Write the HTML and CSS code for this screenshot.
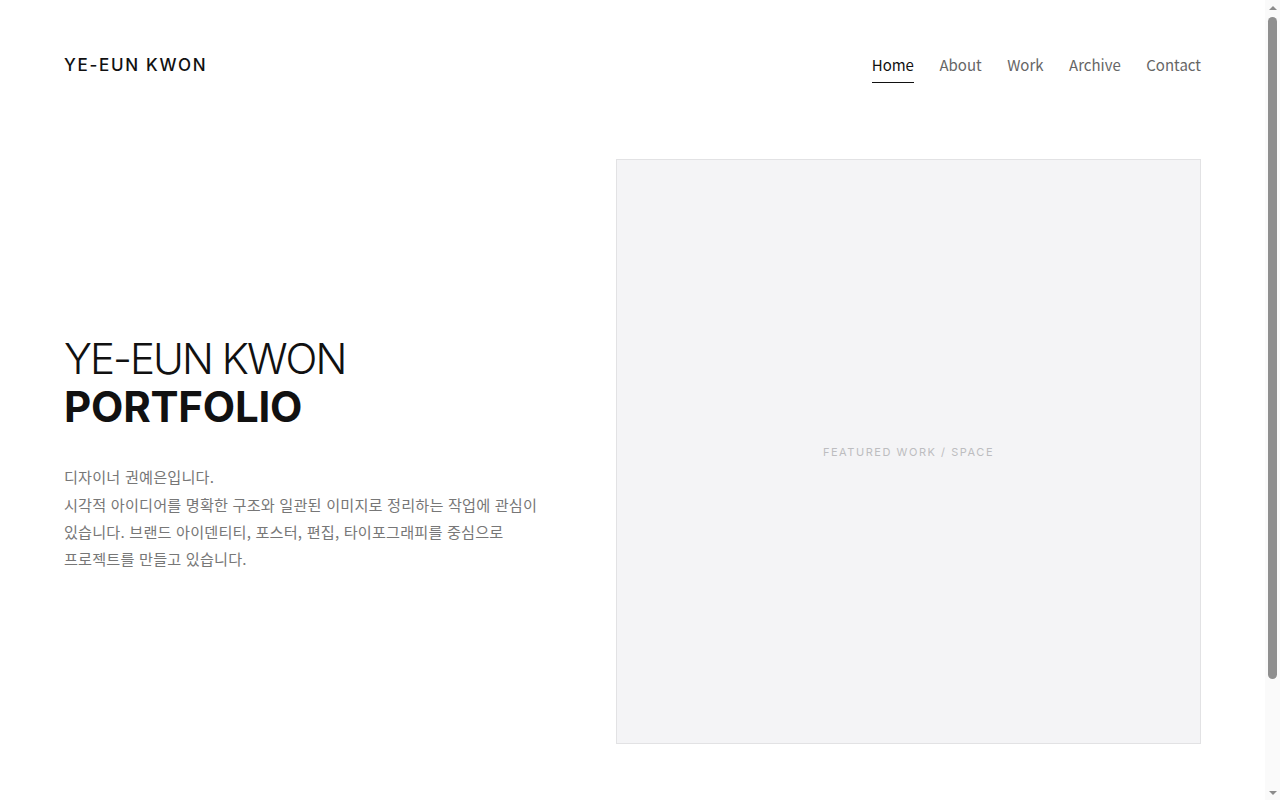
FILE: index.html
```html
<!DOCTYPE html>
<html lang="ko">
<head>
<meta charset="utf-8">
<title>YE-EUN KWON Portfolio</title>
<link rel="stylesheet" href="styles.css">
</head>
<body>
<div class="page">
  <header class="site-header">
    <a class="logo" href="#">YE-EUN KWON</a>
    <nav class="nav">
      <a class="nav-link active" href="#">Home</a>
      <a class="nav-link" href="#">About</a>
      <a class="nav-link" href="#">Work</a>
      <a class="nav-link" href="#">Archive</a>
      <a class="nav-link" href="#">Contact</a>
    </nav>
  </header>
  <main class="hero">
    <section class="hero-text">
      <h1 class="hero-title">
        <span class="title-light">YE-EUN KWON</span>
        <span class="title-bold">PORTFOLIO</span>
      </h1>
      <p class="hero-desc">디자이너 권예은입니다.<br>시각적 아이디어를 명확한 구조와 일관된 이미지로 정리하는 작업에 관심이 있습니다. 브랜드 아이덴티티, 포스터, 편집, 타이포그래피를 중심으로 프로젝트를 만들고 있습니다.</p>
    </section>
    <figure class="featured">
      <span class="featured-label">FEATURED WORK / SPACE</span>
    </figure>
  </main>
</div>
<div class="scrollbar" aria-hidden="true">
  <span class="sb-arrow"><span class="sb-tri up"></span></span>
  <span class="sb-thumb"></span>
  <span class="sb-space"></span>
  <span class="sb-arrow"><span class="sb-tri down"></span></span>
</div>
</body>
</html>
```

FILE: styles.css
```css
* { box-sizing: border-box; }
html, body {
  margin: 0;
  padding: 0;
}
body {
  background: #fff;
  color: #111;
  font-family: "Noto Sans CJK KR", "Noto Sans", sans-serif;
}
a { text-decoration: none; color: inherit; }

.page {
  margin-right: 15px;
  padding-bottom: 186px;
}

.site-header {
  display: flex;
  justify-content: space-between;
  align-items: flex-start;
  padding: 52px 64px 0;
}
.logo {
  font-family: "Inter", sans-serif;
  font-size: 17px;
  line-height: 24px;
  font-weight: 500;
  letter-spacing: 0.1em;
  color: #111;
  margin-top: 1px;
}
.nav {
  display: flex;
  gap: 25.5px;
  margin-top: 1px;
}
.nav-link {
  font-size: 15px;
  line-height: 24px;
  color: #666;
  padding-bottom: 5px;
  border-bottom: 1px solid transparent;
}
.nav-link.active {
  color: #111;
  border-bottom-color: #111;
}

.hero {
  display: grid;
  grid-template-columns: 1fr 585px;
  gap: 60px;
  align-items: center;
  margin: 76px 64px 0;
}
.hero-text {
  padding-top: 5px;
}
.hero-title {
  margin: 0;
  font-family: "Inter", sans-serif;
  font-size: 42px;
  line-height: 48px;
  color: #111;
}
.title-light {
  display: block;
  font-weight: 300;
  letter-spacing: -0.047em;
}
.title-bold {
  display: block;
  font-weight: 700;
  letter-spacing: -0.005em;
}
.hero-desc {
  margin: 32px 0 0;
  max-width: 480px;
  font-size: 15.2px;
  line-height: 1.8;
  letter-spacing: 0.01em;
  color: #777;
  word-break: keep-all;
}
.featured {
  margin: 0;
  height: 585px;
  background: #f4f4f6;
  border: 1px solid #e2e2e4;
  display: flex;
  align-items: center;
  justify-content: center;
}
.featured-label {
  font-family: "Inter", sans-serif;
  font-size: 11px;
  letter-spacing: 0.14em;
  color: #bdbdc0;
}

/* browser scrollbar as shown in the capture */
.scrollbar {
  position: fixed;
  top: 0;
  right: 0;
  width: 15px;
  height: 100vh;
  background: #fafafa;
  display: flex;
  flex-direction: column;
  align-items: center;
}
.sb-arrow {
  width: 15px;
  height: 15px;
  display: flex;
  align-items: center;
  justify-content: center;
}
.sb-tri {
  width: 0;
  height: 0;
  border-left: 4px solid transparent;
  border-right: 4px solid transparent;
}
.sb-tri.up { border-bottom: 4px solid #8c8c8c; }
.sb-tri.down { border-top: 4px solid #8c8c8c; }
.sb-thumb {
  margin-top: 2px;
  width: 9px;
  height: 662px;
  border-radius: 5px;
  background: #8f8f8f;
}
.sb-space { flex: 1; }
```
